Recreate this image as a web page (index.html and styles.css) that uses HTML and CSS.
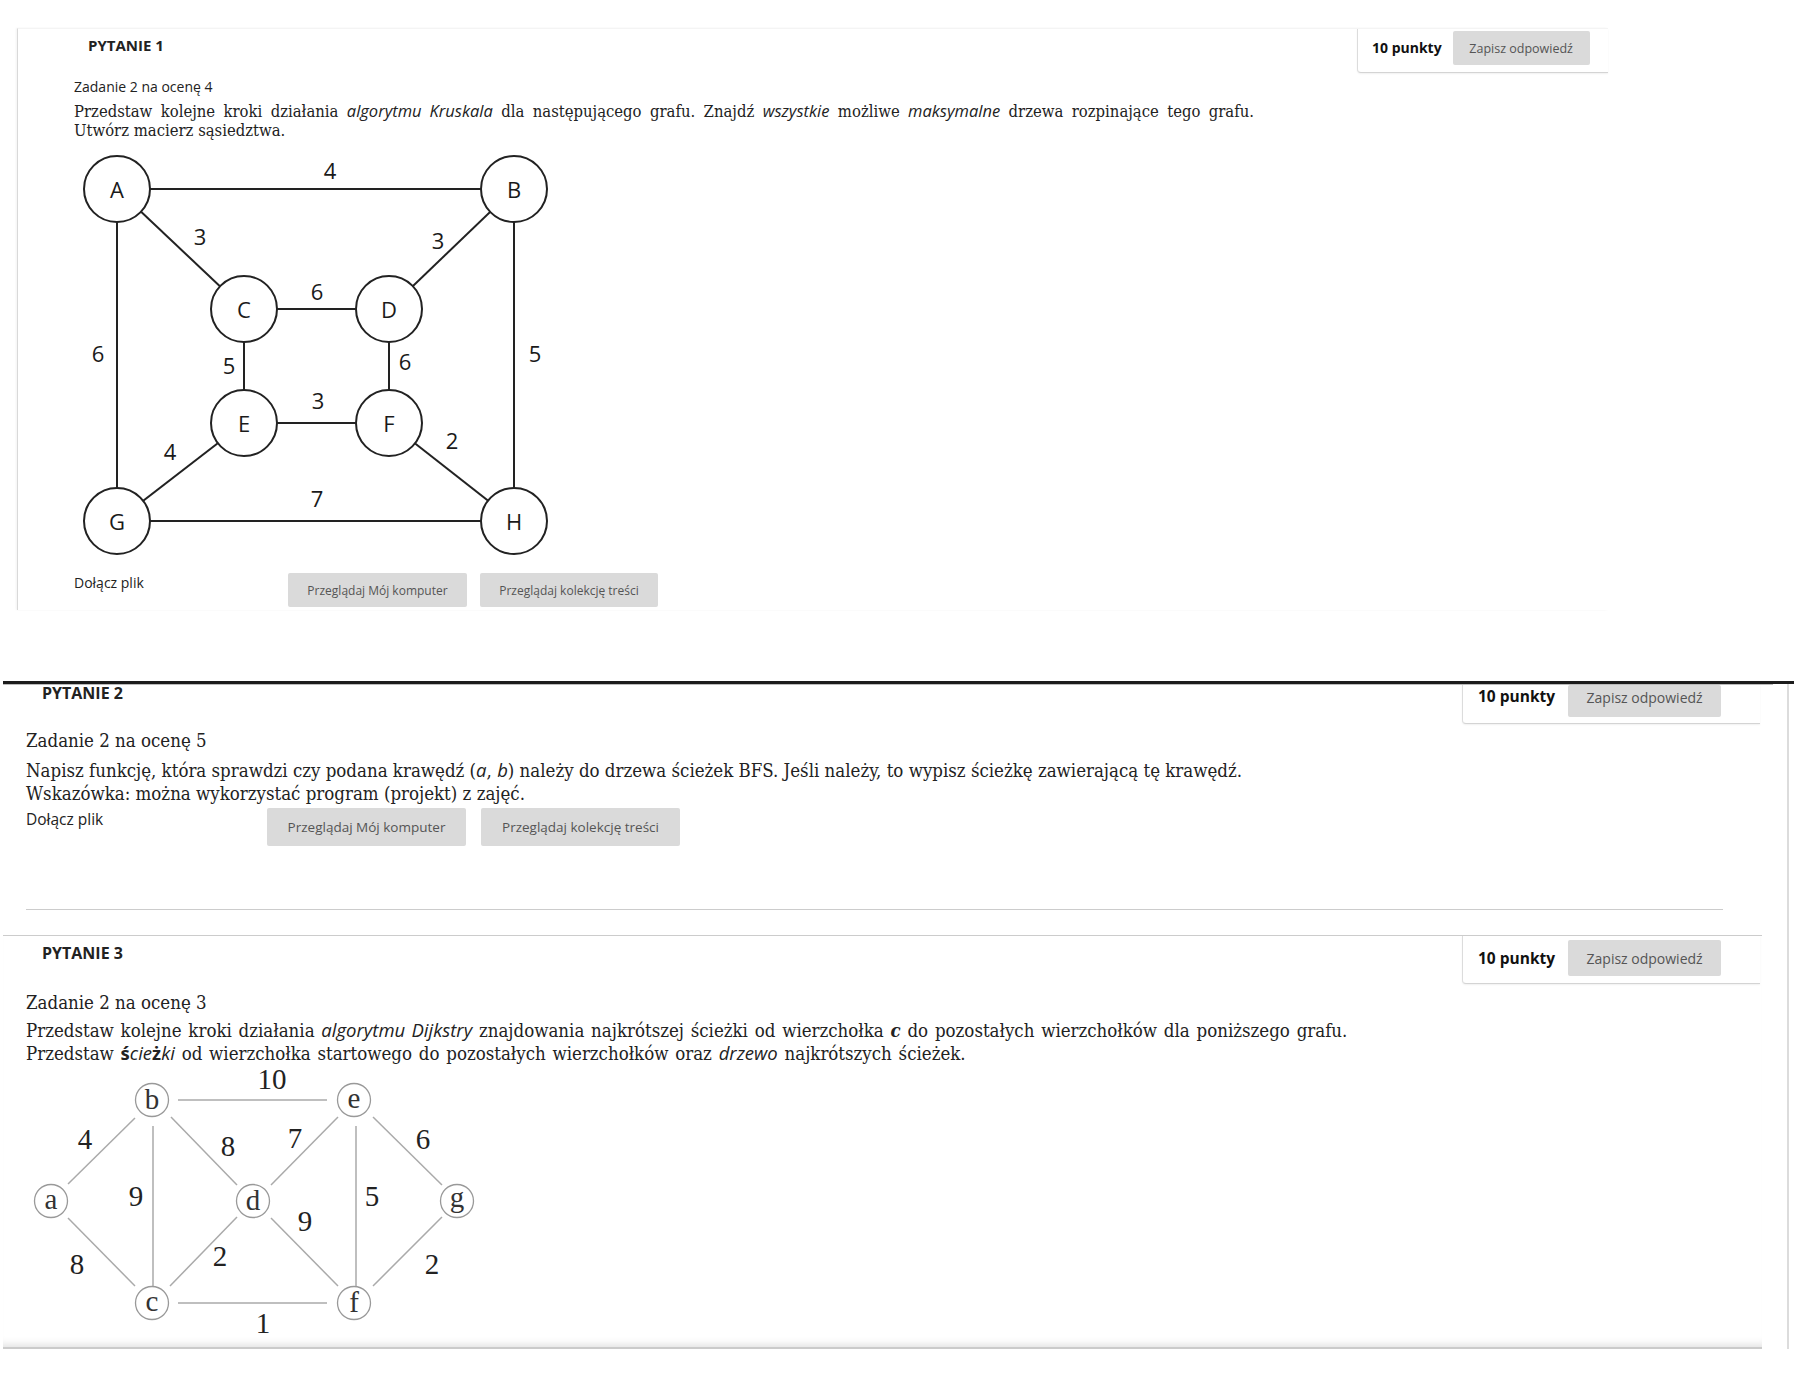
FILE: index.html
```html
<!DOCTYPE html>
<html lang="pl">
<head>
<meta charset="utf-8">
<title>Test</title>
<link rel="stylesheet" href="styles.css">
</head>
<body>
<section class="q1">
  <div class="qhead">
    <div class="qtitle">PYTANIE 1</div>
    <div class="points">
      <span class="pts">10 punkty</span>
      <button class="save">Zapisz odpowiedź</button>
    </div>
  </div>
  <div class="q1-body">
    <div class="task1">Zadanie 2 na ocenę 4</div>
    <p class="text1"><span class="jline">Przedstaw kolejne kroki działania <em class="it">algorytmu Kruskala</em> dla następującego grafu. Znajdź <em class="it">wszystkie</em> możliwe <em class="it">maksymalne</em> drzewa rozpinające tego grafu.</span>Utwórz macierz sąsiedztwa.</p>
    <svg class="graph1" width="480" height="415" viewBox="74 150 480 415">
      <g stroke="#222" stroke-width="2">
        <line x1="117" y1="190" x2="514" y2="190"/>
        <line x1="117" y1="190" x2="244" y2="310"/>
        <line x1="117" y1="190" x2="117" y2="522"/>
        <line x1="514" y1="190" x2="389" y2="310"/>
        <line x1="514" y1="190" x2="514" y2="522"/>
        <line x1="244" y1="310" x2="389" y2="310"/>
        <line x1="244" y1="310" x2="244" y2="424"/>
        <line x1="389" y1="310" x2="389" y2="424"/>
        <line x1="244" y1="424" x2="389" y2="424"/>
        <line x1="244" y1="424" x2="117" y2="522"/>
        <line x1="389" y1="424" x2="514" y2="522"/>
        <line x1="117" y1="522" x2="514" y2="522"/>
      </g>
      <g fill="#fff" stroke="#222" stroke-width="2">
        <circle cx="117" cy="190" r="33"/>
        <circle cx="514" cy="190" r="33"/>
        <circle cx="244" cy="310" r="33"/>
        <circle cx="389" cy="310" r="33"/>
        <circle cx="244" cy="424" r="33"/>
        <circle cx="389" cy="424" r="33"/>
        <circle cx="117" cy="522" r="33"/>
        <circle cx="514" cy="522" r="33"/>
      </g>
      <g class="g1txt" text-anchor="middle" dominant-baseline="central">
        <text x="117" y="190">A</text>
        <text x="514" y="190">B</text>
        <text x="244" y="310">C</text>
        <text x="389" y="310">D</text>
        <text x="244" y="424">E</text>
        <text x="389" y="424">F</text>
        <text x="117" y="522">G</text>
        <text x="514" y="522">H</text>
        <text x="330" y="171">4</text>
        <text x="200" y="237">3</text>
        <text x="438" y="241">3</text>
        <text x="317" y="292">6</text>
        <text x="98" y="354">6</text>
        <text x="535" y="354">5</text>
        <text x="229" y="366">5</text>
        <text x="405" y="362">6</text>
        <text x="318" y="401">3</text>
        <text x="452" y="441">2</text>
        <text x="170" y="452">4</text>
        <text x="317" y="499">7</text>
      </g>
    </svg>
    <div class="attach1">
      <span class="alabel1">Dołącz plik</span>
      <button class="btn1 b1a">Przeglądaj Mój komputer</button>
      <button class="btn1 b1b">Przeglądaj kolekcję treści</button>
    </div>
  </div>
</section>

<div class="divider"></div>

<div class="lower">
  <div class="lower-main">
    <section class="q2">
      <div class="qhead">
        <div class="qtitle">PYTANIE 2</div>
        <div class="points">
          <span class="pts">10 punkty</span>
          <button class="save">Zapisz odpowiedź</button>
        </div>
      </div>
      <div class="qbody">
        <div class="task">Zadanie 2 na ocenę 5</div>
        <p class="text2">Napisz funkcję, która sprawdzi czy podana krawędź (<em class="it">a</em>, <em class="it">b</em>) należy do drzewa ścieżek BFS. Jeśli należy, to wypisz ścieżkę zawierającą tę krawędź.<br>Wskazówka: można wykorzystać program (projekt) z zajęć.</p>
        <div class="attach2">
          <span class="alabel2">Dołącz plik</span>
          <button class="btn2">Przeglądaj Mój komputer</button>
          <button class="btn2">Przeglądaj kolekcję treści</button>
        </div>
        <div class="sep"></div>
      </div>
    </section>

    <section class="q3">
      <div class="qhead">
        <div class="qtitle">PYTANIE 3</div>
        <div class="points">
          <span class="pts">10 punkty</span>
          <button class="save">Zapisz odpowiedź</button>
        </div>
      </div>
      <div class="qbody">
        <div class="task">Zadanie 2 na ocenę 3</div>
        <p class="text3">Przedstaw kolejne kroki działania <em class="it">algorytmu Dijkstry</em> znajdowania najkrótszej ścieżki od wierzchołka <b class="bc">c</b> do pozostałych wierzchołków dla poniższego grafu.<br>Przedstaw <em class="it"><b>ś</b>cie<b>ż</b>ki</em> od wierzchołka startowego do pozostałych wierzchołków oraz <em class="it">drzewo</em> najkrótszych ścieżek.</p>
        <svg class="graph2" width="470" height="286" viewBox="26 1063 470 286">
          <g stroke="#aaa" stroke-width="1.5">
            <line x1="178" y1="1102" x2="327" y2="1102"/>
            <line x1="178" y1="1305" x2="327" y2="1305"/>
            <line x1="68" y1="1186" x2="135" y2="1120"/>
            <line x1="68" y1="1220" x2="135" y2="1288"/>
            <line x1="153" y1="1128" x2="153" y2="1290"/>
            <line x1="171" y1="1119" x2="237" y2="1187"/>
            <line x1="170" y1="1288" x2="237" y2="1219"/>
            <line x1="271" y1="1187" x2="338" y2="1119"/>
            <line x1="271" y1="1220" x2="338" y2="1288"/>
            <line x1="356" y1="1128" x2="356" y2="1290"/>
            <line x1="373" y1="1119" x2="442" y2="1187"/>
            <line x1="373" y1="1288" x2="442" y2="1219"/>
          </g>
          <g fill="#fff" stroke="#999" stroke-width="1.3">
            <circle cx="51" cy="1203" r="16.5"/>
            <circle cx="152" cy="1102" r="16.5"/>
            <circle cx="152" cy="1305" r="16.5"/>
            <circle cx="253" cy="1203" r="16.5"/>
            <circle cx="354" cy="1102" r="16.5"/>
            <circle cx="354" cy="1305" r="16.5"/>
            <circle cx="457" cy="1203" r="16.5"/>
          </g>
          <g class="g2nodes" text-anchor="middle">
            <text x="51" y="1211">a</text>
            <text x="152" y="1111">b</text>
            <text x="152" y="1313">c</text>
            <text x="253" y="1212">d</text>
            <text x="354" y="1110">e</text>
            <text x="354" y="1314">f</text>
            <text x="457" y="1209">g</text>
          </g>
          <g class="g2txt" text-anchor="middle">
            <text x="272" y="1091">10</text>
            <text x="85" y="1151">4</text>
            <text x="228" y="1158">8</text>
            <text x="295" y="1150">7</text>
            <text x="423" y="1151">6</text>
            <text x="136" y="1208">9</text>
            <text x="372" y="1208">5</text>
            <text x="305" y="1233">9</text>
            <text x="77" y="1276">8</text>
            <text x="220" y="1268">2</text>
            <text x="432" y="1276">2</text>
            <text x="263" y="1335">1</text>
          </g>
        </svg>
      </div>
    </section>
  </div>
  <div class="gutter"></div>
</div>
</body>
</html>
```

FILE: styles.css
```css
* { box-sizing: border-box; }

body {
  margin: 0;
  background: #fff;
  font-family: "Open Sans", "DejaVu Sans", sans-serif;
  color: #222;
}

button {
  border: 0;
  margin: 0;
  padding: 0;
  font-family: "Open Sans", sans-serif;
  background: #dadada;
  color: #555;
  border-radius: 2px;
  cursor: pointer;
  white-space: nowrap;
}

.it {
  font-family: "Open Sans", sans-serif;
  font-stretch: normal;
  font-style: italic;
}

.it b { font-weight: 700; font-style: normal; }

.bc {
  font-style: italic;
  font-weight: 700;
}

.qhead {
  display: flex;
  justify-content: space-between;
  align-items: flex-start;
}

.qtitle {
  font-weight: 700;
  color: #222;
}

.points {
  display: flex;
  align-items: flex-start;
  border-left: 1px solid #dcdcdc;
  border-bottom: 1px solid #d4d4d4;
  border-bottom-left-radius: 4px;
  box-shadow: 0 1px 2px rgba(0, 0, 0, 0.06);
  background: #fff;
}

.pts {
  font-weight: 700;
  color: #111;
  white-space: nowrap;
}

/* ---------- Question 1 ---------- */
.q1 {
  margin: 28px 0 0 17px;
  width: 1591px;
  border-left: 1px solid #d9d9d9;
  border-top: 1px solid #f4f4f4;
  box-shadow: -1px 0 2px rgba(0, 0, 0, 0.05);
  padding-bottom: 3px;
}

.q1 .qtitle {
  margin-left: 70px;
  padding-top: 6px;
  font-size: 15px;
  line-height: 20px;
}

.q1 .points {
  width: 251px;
  padding: 2px 0 7px 14px;
}

.q1 .pts {
  font-size: 14px;
  line-height: 34px;
  margin-right: 11px;
}

.q1 .save {
  width: 137px;
  height: 34px;
  font-size: 12.5px;
}

.q1-body {
  padding-left: 56px;
}

.task1 {
  margin-top: 5px;
  font-size: 14px;
  line-height: 18px;
  color: #222;
}

.text1 {
  margin: 5px 0 0;
  width: 1180px;
  font-family: "DejaVu Serif", "Liberation Serif", serif;
  font-stretch: condensed;
  font-size: 16.5px;
  line-height: 19px;
  color: #222;
}

.jline {
  display: block;
  text-align: justify;
  text-align-last: justify;
}

.graph1 {
  display: block;
  margin-top: 9px;
}

.g1txt text {
  font-family: "Open Sans", "DejaVu Sans", sans-serif;
  font-size: 22px;
  fill: #1a1a1a;
}

.attach1 {
  display: flex;
  align-items: flex-start;
  margin-top: 9px;
}

.alabel1 {
  width: 214px;
  font-size: 14px;
  line-height: 20px;
  color: #222;
}

.btn1 {
  height: 34px;
  font-size: 12px;
  margin-right: 13px;
}

.b1a { width: 179px; }
.b1b { width: 178px; }

/* ---------- Divider ---------- */
.divider {
  margin: 71px 0 0 3px;
  border-top: 3px solid #1c1c1c;
}

.lower {
  display: flex;
  align-items: stretch;
}

.lower-main {
  margin-left: 3px;
  width: 1770px;
}

.gutter {
  margin-left: 14px;
  border-left: 2px solid #dcdcdc;
}

/* ---------- Questions 2 & 3 ---------- */
.q2 {
  border-top: 1px solid #bbb;
  padding-bottom: 25px;
}

.q2 .qhead { padding-right: 13px; }
.q3 .qhead { padding-right: 2px; }

.q2 .qtitle,
.q3 .qtitle {
  margin-left: 39px;
  font-size: 16px;
  line-height: 16px;
}

.q3 .qtitle { margin-top: 9px; }

.q2 .points,
.q3 .points {
  width: 298px;
  padding-left: 15px;
}

.q2 .points {
  padding-bottom: 6px;
}

.q3 .points {
  padding-top: 4px;
  padding-bottom: 7px;
}

.q2 .pts,
.q3 .pts {
  font-size: 15.5px;
  margin-right: 13px;
}

.q2 .pts { line-height: 22px; }
.q3 .pts { line-height: 36px; }

.q2 .save,
.q3 .save {
  width: 153px;
  font-size: 14px;
}

.q2 .save {
  height: 32px;
  padding-bottom: 7px;
}
.q3 .save { height: 36px; }

.qbody {
  padding-left: 23px;
}

.task {
  margin-top: 5px;
  font-family: "DejaVu Serif", "Liberation Serif", serif;
  font-stretch: condensed;
  font-size: 18.5px;
  line-height: 23px;
  color: #222;
}

.q3 .task { margin-top: 7px; }

.text2,
.text3 {
  margin: 6px 0 0;
  font-family: "DejaVu Serif", "Liberation Serif", serif;
  font-stretch: condensed;
  font-size: 18.5px;
  line-height: 23px;
  color: #222;
  white-space: nowrap;
}

.text3 {
  margin-top: 5px;
  line-height: 21.5px;
  word-spacing: 1.5px;
}

.attach2 {
  display: flex;
  align-items: flex-start;
  margin-top: 3px;
}

.alabel2 {
  width: 241px;
  font-size: 15.5px;
  line-height: 22px;
  color: #222;
}

.btn2 {
  width: 199px;
  height: 38px;
  font-size: 13.5px;
  margin-right: 15px;
}

.sep {
  margin-top: 63px;
  width: 1697px;
  border-top: 1px solid #ccc;
}

.q3 {
  margin-right: 11px;
  border-top: 1px solid #ccc;
  border-bottom: 2px solid #cbcbcb;
  box-shadow: inset 0 -9px 8px -7px rgba(0, 0, 0, 0.13);
}

.graph2 {
  display: block;
  margin-top: -3px;
}

.g2nodes text {
  font-family: "Liberation Serif", serif;
  font-size: 29px;
  fill: #333;
}

.g2txt text {
  font-family: "Liberation Serif", serif;
  font-size: 29px;
  fill: #222;
}
```
